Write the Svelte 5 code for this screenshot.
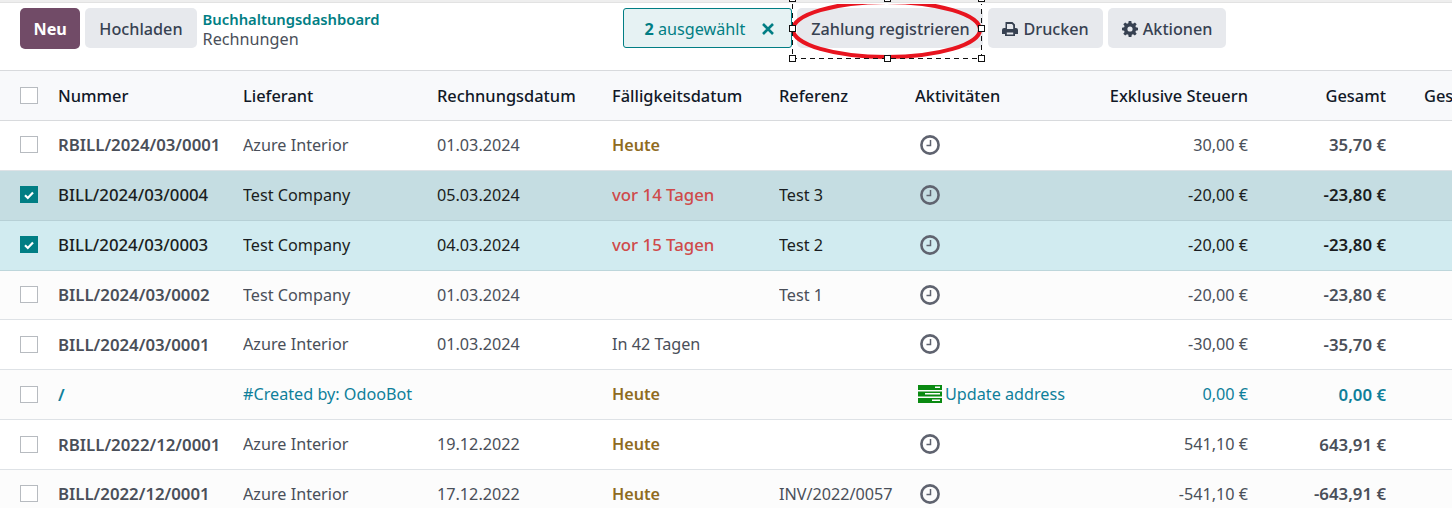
<script>
  const rows = [
    { num: 'RBILL/2024/03/0001', partner: 'Azure Interior', date: '01.03.2024', due: 'Heute', dueType: 'today', ref: '', net: '30,00 €', total: '35,70 €' },
    { num: 'BILL/2024/03/0004', partner: 'Test Company', date: '05.03.2024', due: 'vor 14 Tagen', dueType: 'late', ref: 'Test 3', net: '-20,00 €', total: '-23,80 €', sel: 'sel-hover' },
    { num: 'BILL/2024/03/0003', partner: 'Test Company', date: '04.03.2024', due: 'vor 15 Tagen', dueType: 'late', ref: 'Test 2', net: '-20,00 €', total: '-23,80 €', sel: 'sel' },
    { num: 'BILL/2024/03/0002', partner: 'Test Company', date: '01.03.2024', due: '', dueType: '', ref: 'Test 1', net: '-20,00 €', total: '-23,80 €' },
    { num: 'BILL/2024/03/0001', partner: 'Azure Interior', date: '01.03.2024', due: 'In 42 Tagen', dueType: '', ref: '', net: '-30,00 €', total: '-35,70 €' },
    { num: '/', partner: '#Created by: OdooBot', date: '', due: 'Heute', dueType: 'today', ref: '', net: '0,00 €', total: '0,00 €', draft: true, activity: 'Update address' },
    { num: 'RBILL/2022/12/0001', partner: 'Azure Interior', date: '19.12.2022', due: 'Heute', dueType: 'today', ref: '', net: '541,10 €', total: '643,91 €' },
    { num: 'BILL/2022/12/0001', partner: 'Azure Interior', date: '17.12.2022', due: 'Heute', dueType: 'today', ref: 'INV/2022/0057', net: '-541,10 €', total: '-643,91 €' }
  ];
  const handles = [[3, -2], [98, -2], [192, -2], [3, 28], [192, 28], [3, 58], [98, 58], [192, 58]];
</script>

<div class="page">
  <div class="strip"></div>
  <div class="control">
    <div class="left">
      <button class="btn primary">Neu</button>
      <button class="btn">Hochladen</button>
      <div class="crumbs">
        <span class="crumb-link">Buchhaltungsdashboard</span>
        <span class="crumb-now">Rechnungen</span>
      </div>
    </div>
    <div class="actions">
      <div class="selected">
        <span><b>2</b> ausgewählt</span>
        <svg viewBox="0 0 14 14" width="14" height="14"><path d="M2 2l10 10M12 2L2 12" stroke="#017e84" stroke-width="2.600" fill="none" /></svg>
      </div>
      <button class="btn pay">Zahlung registrieren</button>
      <button class="btn">
        <svg class="ico" viewBox="0 0 16 16" width="16" height="16"><path fill="currentColor" d="M3.500 1h7L13 3.500V7h1a2 2 0 0 1 2 2v4h-3v2H3v-2H0V9a2 2 0 0 1 2-2h1.500zM5 3v5h6.200V4.400L10 3zM4.800 11.500v2h6.400v-2z"/></svg>
        Drucken
      </button>
      <button class="btn">
        <svg class="ico" viewBox="0 0 16 16" width="16" height="16"><path fill="currentColor" fill-rule="evenodd" d="M6.700 0h2.600l.4 2.200 1.300.5L12.900 1.400l1.800 1.800-1.300 1.900.5 1.200 2.100.4v2.600l-2.100.4-.5 1.300 1.300 1.800-1.800 1.800-1.900-1.300-1.200.5-.4 2.200H6.700l-.4-2.200-1.300-.5-1.800 1.300-1.900-1.800 1.300-1.800-.5-1.300L0 9.300V6.700l2.100-.4.500-1.200-1.300-1.900 1.900-1.800L5 2.700l1.300-.5zM8 5.400a2.600 2.600 0 1 0 0 5.200 2.600 2.600 0 0 0 0-5.200z"/></svg>
        Aktionen
      </button>
    </div>
  </div>

  <table>
    <colgroup>
      <col style="width:58px" /><col style="width:185px" /><col style="width:194px" /><col style="width:175px" />
      <col style="width:167px" /><col style="width:136px" /><col style="width:176px" /><col style="width:157px" />
      <col style="width:138px" /><col style="width:66px" />
    </colgroup>
    <thead>
      <tr>
        <th class="check"><span class="box"></span></th>
        <th>Nummer</th>
        <th>Lieferant</th>
        <th>Rechnungsdatum</th>
        <th>Fälligkeitsdatum</th>
        <th>Referenz</th>
        <th>Aktivitäten</th>
        <th class="num">Exklusive Steuern</th>
        <th class="num">Gesamt</th>
        <th class="last">Ges</th>
      </tr>
    </thead>
    <tbody>
      {#each rows as r, i}
        <tr class={r.sel || ''} class:draft={r.draft} class:odd={i % 2 === 1 && !r.sel}>
          <td class="check">
            {#if r.sel}
              <span class="box on">
                <svg viewBox="0 0 12 12" width="12" height="12"><path d="M2 6.300l2.800 2.700L10 3.500" fill="none" stroke="#fff" stroke-width="2.200" /></svg>
              </span>
            {:else}
              <span class="box"></span>
            {/if}
          </td>
          <td class="strong" class:plain={r.sel}>{r.num}</td>
          <td>{r.partner}</td>
          <td>{r.date}</td>
          <td class={r.dueType}>{r.due}</td>
          <td>{r.ref}</td>
          <td class="activity">
            {#if r.activity}
              <span class="act-wrap">
                <svg viewBox="0 0 24 18" width="24" height="18">
                  <rect x="0" y="0" width="24" height="5" fill="#0a8a12" /><rect x="0" y="6.500" width="24" height="5" fill="#0a8a12" /><rect x="0" y="13" width="24" height="5" fill="#0a8a12" />
                  <rect x="17" y="1.500" width="5" height="1.500" fill="#fff" /><rect x="7" y="8" width="15" height="1.500" fill="#fff" /><rect x="14" y="14.500" width="8" height="1.500" fill="#fff" />
                </svg>
                {r.activity}
              </span>
            {:else}
              <svg class="clock" viewBox="0 0 20 20" width="20" height="20">
                <circle cx="10" cy="10" r="8.600" fill="none" stroke="#5f636f" stroke-width="2.600" />
                <path d="M10.500 5v5.500H6.500" fill="none" stroke="#5f636f" stroke-width="1.500" />
              </svg>
            {/if}
          </td>
          <td class="num">{r.net}</td>
          <td class="num strong">{r.total}</td>
          <td></td>
        </tr>
      {/each}
    </tbody>
  </table>

  <svg class="markup" width="200" height="64" viewBox="0 0 200 64">
    <defs><clipPath id="below-strip"><rect x="0" y="4" width="200" height="60" /></clipPath></defs>
    <ellipse clip-path="url(#below-strip)" cx="97.500" cy="29.500" rx="93.500" ry="27.500" fill="none" stroke="#e8141f" stroke-width="4" />
    <path d="M3.500 4V58.500H192.500V4" fill="none" stroke="#111" stroke-dasharray="5 4" />
    {#each handles as [x, y]}
      <rect x={x - 2.500} y={y - 2.500} width="6" height="6" fill="#fff" stroke="#111" />
    {/each}
  </svg>
</div>

<style>
  :global(body) {
    margin: 0;
    background: #fff;
  }

  .page {
    position: relative;
    width: 1452px;
    height: 508px;
    overflow: hidden;
    font-family: "Noto Sans", "Open Sans", sans-serif;
    font-size: 16.200px;
    color: #4a4f59;
    background: #fff;
  }

  .strip {
    height: 3px;
    background: #eeeeee;
    border-bottom: 1px solid #e2e2e2;
    box-sizing: border-box;
  }

  .control {
    display: flex;
    height: 68px;
    padding: 5px 0 0 20px;
    box-sizing: border-box;
    border-bottom: 1px solid #d8dadd;
  }

  .left {
    display: flex;
    gap: 5px;
    align-items: flex-start;
  }

  .btn {
    height: 40px;
    padding: 1px 14px 0;
    border: 0;
    border-radius: 5px;
    background: #e7e9ed;
    color: #374151;
    font: inherit;
    font-weight: 500;
    white-space: nowrap;
    display: inline-flex;
    align-items: center;
    gap: 5px;
  }

  .primary {
    height: 41px;
    padding: 1px 13.500px 0;
    background: #714b67;
    color: #fff;
    font-weight: 700;
  }

  .crumbs {
    display: flex;
    flex-direction: column;
    margin-left: 1px;
    padding-top: 1px;
    line-height: 20px;
  }

  .crumb-link {
    color: #017e84;
    font-size: 14.800px;
    font-weight: 600;
    line-height: 20px;
  }

  .crumb-now {
    color: #4a4f59;
  }

  .actions {
    display: flex;
    gap: 5px;
    margin-left: 244px;
    align-items: flex-start;
  }

  .selected {
    width: 169px;
    height: 40px;
    box-sizing: border-box;
    padding: 1px 16px 0 20px;
    display: flex;
    align-items: center;
    justify-content: space-between;
    border: 1px solid #017e84;
    border-radius: 3px;
    background: #e6f2f3;
    color: #017e84;
  }

  .pay {
    width: 186px;
    justify-content: center;
    padding: 1px 0 0;
  }

  .ico {
    flex: none;
  }

  table {
    width: 1452px;
    table-layout: fixed;
    border-collapse: collapse;
    color: #4a4f59;
  }

  th {
    height: 49px;
    padding: 0;
    text-align: left;
    font-size: 16.400px;
    font-weight: 500;
    color: #111827;
    background: #f8f9fb;
    border-bottom: 1px solid #d8dadd;
    white-space: nowrap;
    overflow: hidden;
  }

  td {
    height: 49.860px;
    padding: 0 0 1px;
    box-sizing: border-box;
    border-bottom: 1px solid #dee2e6;
    white-space: nowrap;
    overflow: hidden;
  }

  .check {
    padding-left: 20px;
  }

  .box {
    display: flex;
    align-items: center;
    justify-content: center;
    width: 18px;
    height: 17px;
    box-sizing: border-box;
    border: 1px solid #b7bbc0;
    background: #fff;
  }

  .box.on {
    background: #017e84;
    border-color: #017e84;
  }

  .num {
    text-align: right;
  }

  .last {
    padding-left: 38px;
  }

  .strong {
    font-weight: 600;
    font-size: 16.800px;
  }

  .plain {
    color: #111;
    font-weight: 500;
  }

  .odd {
    background: #fcfcfc;
  }

  .sel-hover td {
    background: #c5dde2;
    color: #1a1d21;
    border-bottom-color: #b7d0d6;
  }

  .sel td {
    background: #d1ebf0;
    color: #1a1d21;
    border-bottom-color: #bdd6db;
  }

  td.today {
    color: #8f6b1e;
    font-weight: 600;
  }

  td.late,
  .sel td.late,
  .sel-hover td.late {
    color: #cf4a4a;
    font-size: 16.800px;
    font-weight: 500;
  }

  .draft td {
    color: #0f7f9a;
  }

  .draft td.today {
    color: #8f6b1e;
  }

  .clock {
    display: block;
    margin-left: 5px;
  }

  .act-wrap {
    display: flex;
    align-items: center;
    gap: 3px;
    margin-left: 3px;
  }

  .markup {
    position: absolute;
    left: 789px;
    top: 0;
    overflow: hidden;
  }
</style>
